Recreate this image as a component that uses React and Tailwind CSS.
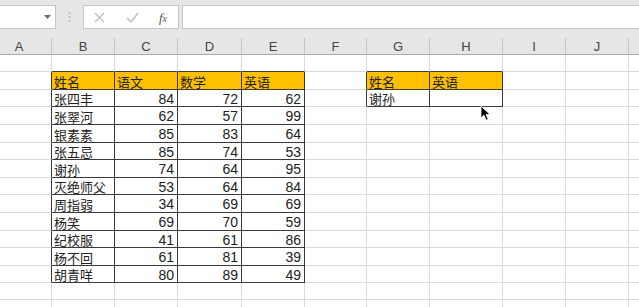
import React from "react";

const colWidths = [65, 63, 63, 64, 63, 62, 63, 73, 63, 63, 63];
const colLetters = ["A", "B", "C", "D", "E", "F", "G", "H", "I", "J", ""];
const rowHeights = [17, 18, 17, 18, 18, 17, 18, 17, 18, 18, 17, 18, 17, 17, 17];

const data = [
  ["张四丰", 84, 72, 62],
  ["张翠河", 62, 57, 99],
  ["银素素", 85, 83, 64],
  ["张五忌", 85, 74, 53],
  ["谢孙", 74, 64, 95],
  ["灭绝师父", 53, 64, 84],
  ["周指弱", 34, 69, 69],
  ["杨笑", 69, 70, 59],
  ["纪校服", 41, 61, 86],
  ["杨不回", 61, 81, 39],
  ["胡青咩", 80, 89, 49],
];

function inTable(r, c) {
  if (r >= 1 && r <= 12 && c >= 1 && c <= 4) return true;
  if (r >= 1 && r <= 2 && c >= 6 && c <= 7) return true;
  return false;
}

function isHeader(r, c) {
  return r === 1 && ((c >= 1 && c <= 4) || (c >= 6 && c <= 7));
}

function cellContent(r, c) {
  if (r === 1) {
    const h1 = ["姓名", "语文", "数学", "英语"];
    if (c >= 1 && c <= 4) return { text: h1[c - 1], cjk: true };
    if (c === 6) return { text: "姓名", cjk: true };
    if (c === 7) return { text: "英语", cjk: true };
  }
  if (r >= 2 && r <= 12 && c >= 1 && c <= 4) {
    const v = data[r - 2][c - 1];
    return { text: String(v), cjk: c === 1 };
  }
  if (r === 2 && c === 6) return { text: "谢孙", cjk: true };
  return null;
}

function Cell({ r, c }) {
  const darkR = inTable(r, c) || inTable(r, c + 1);
  const darkB = inTable(r, c) || inTable(r + 1, c);
  const content = cellContent(r, c);
  const cls = [
    "flex items-center shrink-0 border-r border-b pt-[1px] overflow-hidden whitespace-nowrap text-[#222]",
    darkR ? "border-r-[#3a3a3a]" : "border-r-[#dadada]",
    darkB ? "border-b-[#3a3a3a]" : "border-b-[#dadada]",
    isHeader(r, c) ? "bg-[#ffc000]" : "bg-white",
    content && !content.cjk ? "justify-end pr-[3px]" : "justify-start pl-[2px]",
  ].join(" ");
  return (
    <div className={cls} style={{ width: colWidths[c], height: rowHeights[r] }}>
      {content &&
        (content.cjk ? (
          <span className="text-[13px] leading-none font-['Noto_Sans_CJK_SC',sans-serif]">
            {content.text}
          </span>
        ) : (
          <span className="text-[14px] leading-none font-['Liberation_Sans',Arial,sans-serif]">
            {content.text}
          </span>
        ))}
    </div>
  );
}

function Toolbar() {
  return (
    <div className="h-[38px] bg-[#e6e6e6] pt-[5px] flex items-start">
      <div className="w-[56px] h-[24px] bg-white border border-l-0 border-[#c6c6c6] flex items-center justify-end pr-[4px]">
        <svg width="7" height="4" viewBox="0 0 7 4">
          <path d="M0 0 L7 0 L3.5 4 Z" fill="#6b6b6b" />
        </svg>
      </div>
      <div className="w-[27px] h-[24px] flex items-center justify-center">
        <svg width="3" height="10" viewBox="0 0 3 10">
          <rect x="0.5" y="0" width="2" height="2" fill="#c4c4c4" />
          <rect x="0.5" y="4" width="2" height="2" fill="#c4c4c4" />
          <rect x="0.5" y="8" width="2" height="2" fill="#c4c4c4" />
        </svg>
      </div>
      <div className="w-[96px] h-[24px] bg-white border border-[#c6c6c6] flex items-center">
        <div className="w-[30px] flex items-center justify-center">
          <svg width="11" height="11" viewBox="0 0 11 11">
            <path d="M1 1 L10 10 M10 1 L1 10" stroke="#bdbdbd" strokeWidth="1.3" fill="none" />
          </svg>
        </div>
        <div className="w-[36px] flex items-center justify-center">
          <svg width="13" height="11" viewBox="0 0 13 11">
            <path d="M1 6 L5 10 L12 1" stroke="#bdbdbd" strokeWidth="1.4" fill="none" />
          </svg>
        </div>
        <div className="w-[26px] flex items-center justify-center pt-[1px]">
          <span className="italic text-[13px] leading-none text-[#555] font-['Liberation_Serif',serif]">
            f<span className="text-[10px]">x</span>
          </span>
        </div>
      </div>
      <div className="ml-[3px] flex-1 h-[24px] bg-white border border-r-0 border-[#c6c6c6]" />
    </div>
  );
}

function ColumnHeader() {
  return (
    <div className="flex h-[17px] bg-[#e6e6e6]">
      {colLetters.map((l, i) => (
        <div
          key={i}
          className="shrink-0 h-[17px] border-r border-b border-r-[#c4c4c4] border-b-[#ababab] flex items-center justify-center text-[13px] leading-none text-[#444] font-['Liberation_Sans',Arial,sans-serif]"
          style={{ width: colWidths[i] }}
        >
          {l}
        </div>
      ))}
    </div>
  );
}

export default function App() {
  return (
    <div className="w-[639px] h-[307px] overflow-hidden bg-white relative">
      <Toolbar />
      <div className="overflow-hidden">
        <div className="-ml-[13px] flex flex-col w-max">
          <ColumnHeader />
          {rowHeights.map((h, r) => (
            <div key={r} className="flex">
              {colWidths.map((w, c) => (
                <Cell key={c} r={r} c={c} />
              ))}
            </div>
          ))}
        </div>
      </div>
      <svg
        className="absolute left-[480px] top-[105px]"
        width="11"
        height="17"
        viewBox="0 0 11 17"
      >
        <path
          d="M1 1 L1 13 L4 10.2 L6.2 15.2 L8.2 14.3 L6 9.5 L10 9.5 Z"
          fill="#000"
          stroke="#fff"
          strokeWidth="0.8"
          strokeLinejoin="round"
        />
      </svg>
    </div>
  );
}
